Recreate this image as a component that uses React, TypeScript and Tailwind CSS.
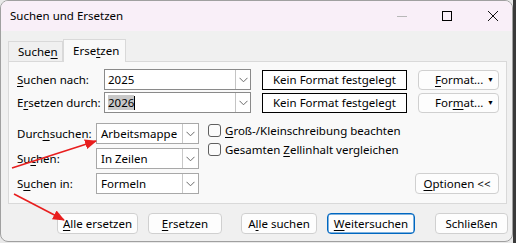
import React from "react";

// underline the access key at position i
const Key = ({ text, i }: { text: string; i: number }) => (
  <>
    {text.slice(0, i)}
    <span className="underline decoration-1 underline-offset-[2px]">{text[i]}</span>
    {text.slice(i + 1)}
  </>
);

const Chevron = () => (
  <svg width="9" height="6" viewBox="0 0 9 6" fill="none">
    <path d="M0.5 0.8 L4.5 4.8 L8.5 0.8" stroke="#6a6a6a" strokeWidth="1" />
  </svg>
);

const ComboInput = ({ value, selected }: { value: string; selected?: boolean }) => (
  <div className="flex h-[21px] w-[147px] border border-[#8a8a8a] bg-white">
    <div className="flex flex-1 items-center pl-[3px]">
      {selected ? (
        <>
          <span className="bg-[#c8c8c8] leading-[15px]">{value}</span>
          <span className="h-[14px] w-px bg-black" />
        </>
      ) : (
        <span>{value}</span>
      )}
    </div>
    <div className="flex w-[15px] items-center justify-center border-l border-[#c4c4c4]">
      <Chevron />
    </div>
  </div>
);

const Combo = ({ value }: { value: string }) => (
  <div className="flex h-[21px] w-[103px] border border-[#a8a8a8] bg-white">
    <div className="flex flex-1 items-center pl-[4px]">{value}</div>
    <div className="flex w-[16px] items-center justify-center border-l border-[#c8c8c8]">
      <Chevron />
    </div>
  </div>
);

const Button = ({
  children,
  w,
  focused,
}: {
  children: React.ReactNode;
  w: string;
  focused?: boolean;
}) => (
  <div
    className={`flex h-[21px] items-center justify-center rounded-[4px] bg-[#fdfdfd] ${w} ${
      focused ? "border border-[#0067c0] shadow-[inset_0_0_0_0.5px_#0067c0]" : "border border-[#d0d0d0]"
    }`}
  >
    {children}
  </div>
);

const NoFormat = () => (
  <div className="flex h-[20px] w-[145px] items-center justify-center border border-black bg-white">
    Kein Format festgelegt
  </div>
);

const FormatButton = ({ i }: { i: number }) => (
  <div className="flex h-[20px] w-[81px] items-center rounded-[4px] border border-[#d0d0d0] bg-[#fdfdfd] pl-[16px] pr-[4px]">
    <span className="flex-1">
      <Key text="Format..." i={i} />
    </span>
    <span className="text-[7px] leading-none">▼</span>
  </div>
);

const CheckRow = ({ children }: { children: React.ReactNode }) => (
  <div className="flex h-[19px] items-center">
    <div className="h-[13px] w-[13px] rounded-[3px] border border-[#5f5f5f] bg-[#fbfbfb]" />
    <span className="ml-[4px]">{children}</span>
  </div>
);

export default function App() {
  return (
    <div
      className="flex h-[243px] w-[516px] bg-[#e9e9e9] text-[11.5px] text-black"
      style={{ fontFamily: '"Noto Sans", "Segoe UI", sans-serif' }}
    >
      <div className="relative flex h-[242px] w-[513px] flex-col overflow-hidden rounded-lg border border-[#a0a0a0] bg-[#f0f0f0]">
        {/* title bar */}
        <div className="flex h-[30px] items-center bg-[#f9eff8]">
          <span className="ml-[9px] text-[11.5px]">Suchen und Ersetzen</span>
          <div className="ml-auto flex items-center">
            <div className="h-px w-[10px] bg-[#b8b8b8]" />
            <div className="ml-[35px] h-[10px] w-[10px] border border-black" />
            <svg className="ml-[36px] mr-[14px]" width="10" height="10" viewBox="0 0 10 10">
              <path d="M0 0 L10 10 M10 0 L0 10" stroke="#111" strokeWidth="1" />
            </svg>
          </div>
        </div>

        {/* tabs */}
        <div className="mt-[7px] flex h-[23px] items-end pl-[7px]">
          <div className="flex h-[20px] w-[55px] items-center border border-b-0 border-[#d9d9d9] pl-[9px]">
            <Key text="Suchen" i={5} />
          </div>
          <div className="relative top-px z-10 flex h-[23px] w-[63px] items-center border border-b-0 border-[#d9d9d9] bg-[#f9f9f9] pl-[9px]">
            <Key text="Ersetzen" i={4} />
          </div>
        </div>

        {/* panel */}
        <div className="ml-[7px] flex h-[143px] w-[499px] flex-col border border-[#d9d9d9] bg-[#f9f9f9] pl-[8px] pr-[7px]">
          <div className="mt-[7px] flex items-center">
            <span className="w-[87px]">
              <Key text="Suchen nach:" i={0} />
            </span>
            <ComboInput value="2025" />
            <div className="ml-[11px]">
              <NoFormat />
            </div>
            <div className="ml-auto">
              <FormatButton i={0} />
            </div>
          </div>
          <div className="mt-[2px] flex items-center">
            <span className="w-[87px]">
              <Key text="Ersetzen durch:" i={1} />
            </span>
            <ComboInput value="2026" selected />
            <div className="ml-[11px]">
              <NoFormat />
            </div>
            <div className="ml-auto">
              <FormatButton i={3} />
            </div>
          </div>

          <div className="mt-[10px] flex">
            <div className="flex flex-col gap-[4px]">
              <div className="flex items-center">
                <span className="w-[79px]">
                  <Key text="Durchsuchen:" i={4} />
                </span>
                <Combo value="Arbeitsmappe" />
              </div>
              <div className="flex items-center">
                <span className="w-[79px]">
                  <Key text="Suchen:" i={2} />
                </span>
                <Combo value="In Zeilen" />
              </div>
              <div className="flex items-center">
                <span className="w-[79px]">
                  <Key text="Suchen in:" i={1} />
                </span>
                <Combo value="Formeln" />
              </div>
            </div>
            <div className="-mt-[2px] ml-[9px] flex flex-col">
              <CheckRow>
                <Key text="Groß-/Kleinschreibung beachten" i={0} />
              </CheckRow>
              <CheckRow>
                <Key text="Gesamten Zellinhalt vergleichen" i={9} />
              </CheckRow>
            </div>
            <div className="ml-auto flex flex-col justify-end">
              <Button w="w-[84px]">
                <Key text="Optionen <<" i={0} />
              </Button>
            </div>
          </div>
        </div>

        {/* buttons */}
        <div className="mt-[9px] flex pl-[56px]">
          <Button w="w-[81px]">
            <Key text="Alle ersetzen" i={0} />
          </Button>
          <div className="ml-[10px]">
            <Button w="w-[74px]">
              <Key text="Ersetzen" i={0} />
            </Button>
          </div>
          <div className="ml-[19px]">
            <Button w="w-[76px]">
              <Key text="Alle suchen" i={1} />
            </Button>
          </div>
          <div className="ml-[10px]">
            <Button w="w-[88px]" focused>
              <Key text="Weitersuchen" i={0} />
            </Button>
          </div>
          <div className="ml-[20px]">
            <Button w="w-[73px]">Schließen</Button>
          </div>
        </div>

        {/* red annotation arrows */}
        <svg className="pointer-events-none absolute left-[-1px] top-[-1px]" width="516" height="243">
          <defs>
            <marker id="head" markerWidth="12" markerHeight="10" refX="11" refY="5" orient="auto" markerUnits="userSpaceOnUse">
              <path d="M0 0 L12 5 L0 10 Z" fill="#e81e1e" />
            </marker>
          </defs>
          <line x1="12" y1="168" x2="96" y2="141" stroke="#e81e1e" strokeWidth="1.6" markerEnd="url(#head)" />
          <line x1="14" y1="194" x2="64" y2="220" stroke="#e81e1e" strokeWidth="1.6" markerEnd="url(#head)" />
        </svg>
      </div>
      <div className="flex-1 bg-[#3a3a3a]" />
    </div>
  );
}
